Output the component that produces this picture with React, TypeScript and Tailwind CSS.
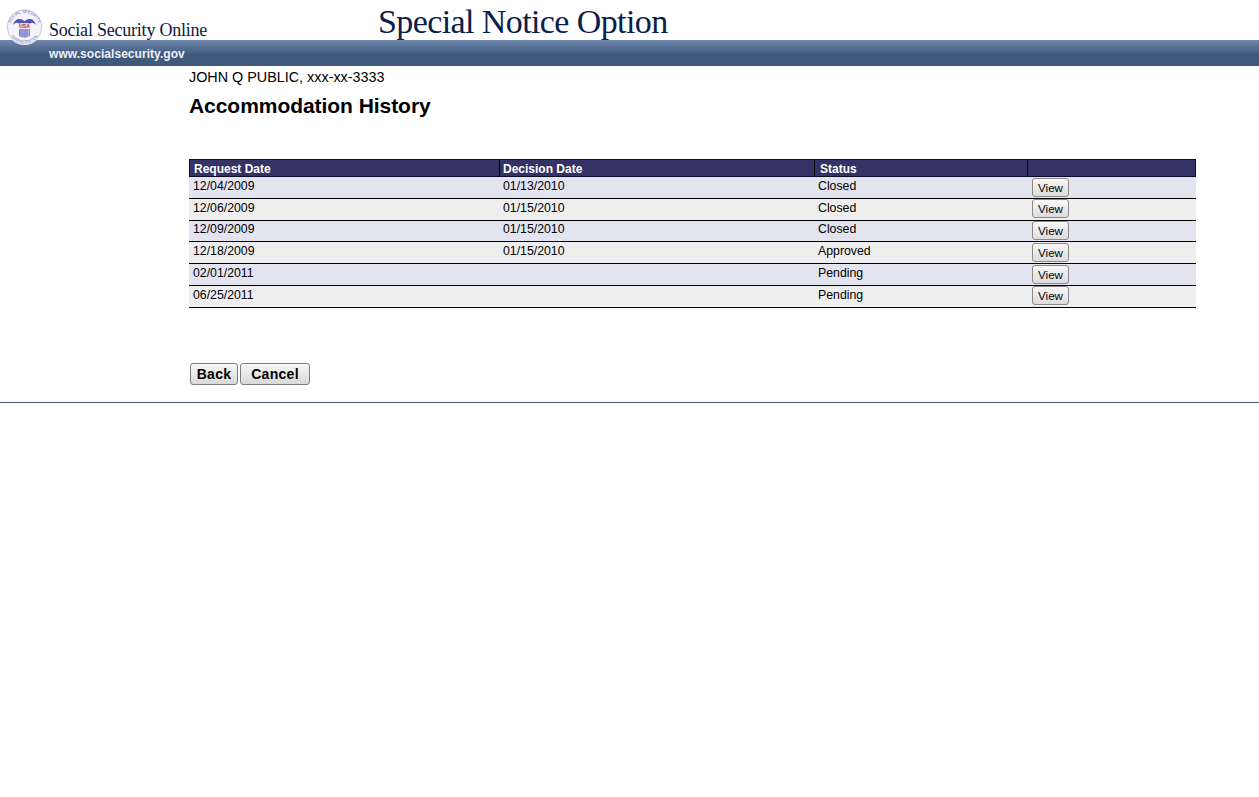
const rows = [
  { d: ["12/04/2009", "01/13/2010", "Closed"], h: "h-[22px] leading-[18px]", b: "pt-[1px]" },
  { d: ["12/06/2009", "01/15/2010", "Closed"], h: "h-[22px] leading-[18px]", b: "pt-0" },
  { d: ["12/09/2009", "01/15/2010", "Closed"], h: "h-[21px] leading-[16px]", b: "pt-0" },
  { d: ["12/18/2009", "01/15/2010", "Approved"], h: "h-[22px] leading-[18px]", b: "pt-[1px]" },
  { d: ["02/01/2011", "", "Pending"], h: "h-[22px] leading-[18px]", b: "pt-[1px]" },
  { d: ["06/25/2011", "", "Pending"], h: "h-[22px] leading-[18px]", b: "pt-0" },
];

function Seal() {
  return (
    <svg width="37" height="38" viewBox="0 0 38 38" className="absolute left-[6px] top-[8px]">
      <circle cx="19" cy="19" r="18.5" fill="#f4f4fa" />
      <circle cx="19" cy="19" r="17.5" fill="none" stroke="#c9c9e4" strokeWidth="1" />
      <defs>
        <path id="arcTop" d="M4.5 19 A14.5 14.5 0 0 1 33.5 19" />
        <path id="arcBot" d="M2.5 19 A16.5 16.5 0 0 0 35.5 19" />
      </defs>
      <text fontSize="4.2" fill="#6a6aa8" fontFamily="Liberation Sans, sans-serif">
        <textPath href="#arcTop" startOffset="50%" textAnchor="middle">SOCIAL SECURITY</textPath>
      </text>
      <text fontSize="3.8" fill="#6a6aa8" fontFamily="Liberation Sans, sans-serif">
        <textPath href="#arcBot" startOffset="50%" textAnchor="middle">ADMINISTRATION</textPath>
      </text>
      <path d="M7 17 C9 10 15 9 19 13 C23 9 29 10 31 17 C28 14 26 14 24 16 L14 16 C12 14 10 14 7 17 Z" fill="#5252b8" />
      <rect x="14" y="15" width="10" height="6" fill="#f2e4e8" />
      <text x="19" y="20.5" textAnchor="middle" fontSize="5.4" fontWeight="700" fill="#c0272d" fontFamily="Liberation Sans, sans-serif">USA</text>
      <path d="M13.5 21 H24.5 V28 Q19 32 13.5 28 Z" fill="#6a6ad0" />
      <path d="M15.5 21 V29 M17.5 21 V30 M19.5 21 V30 M21.5 21 V30 M23.2 21 V29" stroke="#e8e8f6" strokeWidth="0.7" />
    </svg>
  );
}

function ViewButton() {
  return (
    <button className="w-[37px] h-[19px] rounded-[3px] border border-[#8a8a8a] bg-gradient-to-b from-[#f8f8f8] to-[#dcdcdc] text-[11.6px] leading-[15px] text-black text-center">
      View
    </button>
  );
}

function ActionButton({ label, width }: { label: string; width: string }) {
  return (
    <button className={`${width} h-[22px] rounded-[3px] border border-[#7f7f7f] bg-gradient-to-b from-[#f8f8f8] to-[#d8d8d8] text-[14px] leading-[18px] font-bold text-black text-center tracking-[0.3px]`}>
      {label}
    </button>
  );
}

export default function App() {
  return (
    <div className="min-h-[797px] bg-white text-black font-['Liberation_Sans',Arial,sans-serif]">
      <header className="relative">
        <div className="h-10 flex items-start">
          <div className="w-[378px] shrink-0 pl-[49px] pt-[18px] text-[18px] leading-[24px] text-[#0a1a40] font-['Liberation_Serif',serif] tracking-[-0.22px]">
            Social Security Online
          </div>
          <h1 className="text-[34px] leading-[44px] text-[#0a2048] font-['Liberation_Serif',serif] tracking-[-0.6px]">
            Special Notice Option
          </h1>
        </div>
        <div className="h-[26px] pl-[49px] pt-[7px] bg-[linear-gradient(to_bottom,#7288ac_0%,#566f96_30%,#405a7e_55%,#3f597d_100%)] text-[12px] leading-[14px] font-bold text-[#eef2f8] tracking-[0.05px]">
          www.socialsecurity.gov
        </div>
        <Seal />
      </header>

      <main className="pl-[189px] w-[1196px]">
        <div className="pt-[3px] text-[14.36px] leading-[16px]">JOHN Q PUBLIC, xxx-xx-3333</div>
        <h2 className="mt-[8px] text-[21px] leading-[25px] font-bold tracking-[-0.05px]">Accommodation History</h2>

        <div className="mt-[41px] w-[1007px] text-[12.3px]">
          <div className="flex h-[18px] bg-[#333366] border border-[#0a0a2a] text-white font-bold text-[12px] leading-[19px]">
            <div className="w-[310px] pl-1 border-r border-black">Request Date</div>
            <div className="w-[315px] pl-[3px] border-r border-black">Decision Date</div>
            <div className="w-[213px] pl-[5px] border-r border-black">Status</div>
            <div className="flex-1" />
          </div>
          {rows.map((r, i) => (
            <div
              key={r.d[0]}
              className={`flex border-b border-black ${r.h} ${i % 2 === 0 ? "bg-[#e4e4f0]" : "bg-[#eeeeee]"}`}
            >
              <div className="w-[310px] pl-[4px]">{r.d[0]}</div>
              <div className="w-[315px] pl-[4px]">{r.d[1]}</div>
              <div className="w-[213px] pl-[4px]">{r.d[2]}</div>
              <div className={`flex-1 pl-[5px] ${r.b}`}><ViewButton /></div>
            </div>
          ))}
        </div>

        <div className="mt-[55px] flex gap-[2px] pl-px">
          <ActionButton label="Back" width="w-[48px]" />
          <ActionButton label="Cancel" width="w-[70px]" />
        </div>
      </main>

      <div className="mt-[17px] h-px bg-[#3f597d]" />
    </div>
  );
}
